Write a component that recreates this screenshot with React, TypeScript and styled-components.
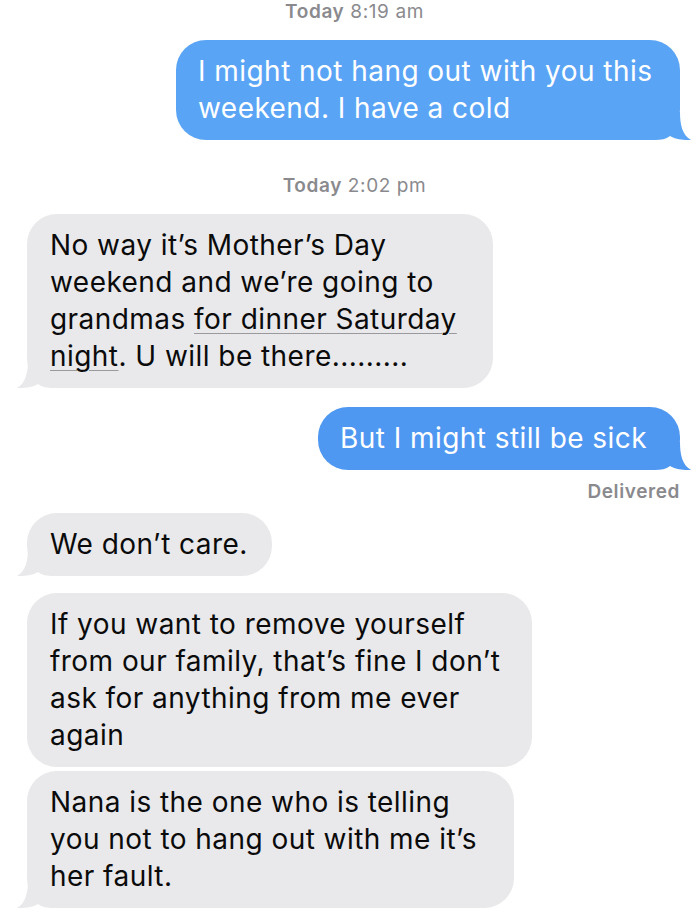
import React from "react";
import styled, { createGlobalStyle } from "styled-components";

const Global = createGlobalStyle`
  html, body { margin: 0; padding: 0; background: #ffffff; }
  body { font-family: Inter, "Noto Sans", sans-serif; -webkit-font-smoothing: antialiased; }
`;

const Thread = styled.div`
  display: flex;
  flex-direction: column;
  width: 700px;
  height: 922px;
  overflow: hidden;
  box-sizing: border-box;
  padding: 0 20px 0 27px;
  background: #fff;
`;

const Stamp = styled.div<{ $mt: number }>`
  margin-top: ${(p) => p.$mt}px;
  align-self: center;
  font-size: 19px;
  line-height: 22px;
  color: #8a8a8e;
  letter-spacing: 0.6px;
  padding-left: 2px;
  b { font-weight: 600; }
`;

const Status = styled.div<{ $mt: number }>`
  margin-top: ${(p) => p.$mt}px;
  align-self: flex-end;
  font-size: 19px;
  line-height: 22px;
  font-weight: 600;
  letter-spacing: 0.6px;
  color: #8a8a8e;
`;

const Bubble = styled.div<{ $mine?: boolean; $mt: number; $w: number; $bg?: string }>`
  position: relative;
  margin-top: ${(p) => p.$mt}px;
  align-self: ${(p) => (p.$mine ? "flex-end" : "flex-start")};
  width: ${(p) => p.$w}px;
  box-sizing: border-box;
  padding: 13px 0 13px ${(p) => (p.$mine ? 22 : 23)}px;
  border-radius: 30px;
  background: ${(p) => p.$bg ?? (p.$mine ? "#5aa4f6" : "#e9e9eb")};
  color: ${(p) => (p.$mine ? "#ffffff" : "#0b0b0b")};
  font-size: 28px;
  letter-spacing: 0.45px;
  line-height: 37px;
  white-space: nowrap;
`;

const Text = styled.span`
  position: relative;
  z-index: 1;
`;

const Link = styled.span`
  text-decoration: underline;
  text-decoration-color: #9a9a9e;
  text-decoration-thickness: 1px;
  text-underline-offset: 4px;
`;

const TailSvg = styled.svg<{ $mine?: boolean }>`
  position: absolute;
  bottom: 0;
  width: 40px;
  height: 28px;
  z-index: 0;
  ${(p) => (p.$mine ? "right: -11px;" : "left: -10px; transform: scaleX(-1);")}
`;

function Tail({ mine, color }: { mine?: boolean; color: string }) {
  return (
    <TailSvg $mine={mine} viewBox="0 0 40 28" aria-hidden>
      <path
        d="M0 0 H29 C29 12 31 23 40 28 C35 28.6 24 27.2 19 24 C15 27 10 28 4 28 H0 Z"
        fill={color}
      />
    </TailSvg>
  );
}

type Msg = {
  mine?: boolean;
  mt: number;
  w: number;
  tail?: boolean;
  bg?: string;
  lines: React.ReactNode[];
};

const GRAY = "#e9e9eb";

export default function App() {
  const render = (m: Msg, i: number) => {
    const color = m.bg ?? (m.mine ? "#5aa4f6" : GRAY);
    return (
      <Bubble key={i} $mine={m.mine} $mt={m.mt} $w={m.w} $bg={m.bg}>
        {m.tail && <Tail mine={m.mine} color={color} />}
        <Text>
          {m.lines.map((l, j) => (
            <React.Fragment key={j}>
              {j > 0 && <br />}
              {l}
            </React.Fragment>
          ))}
        </Text>
      </Bubble>
    );
  };

  return (
    <>
      <Global />
      <Thread>
        <Stamp $mt={1}>
          <b>Today</b> 8:19 am
        </Stamp>
        {render({
          mine: true,
          mt: 17,
          w: 504,
          tail: true,
          lines: ["I might not hang out with you this", "weekend. I have a cold"],
        }, 1)}
        <Stamp $mt={35}>
          <b>Today</b> 2:02 pm
        </Stamp>
        {render({
          mt: 17,
          w: 466,
          tail: true,
          lines: [
            "No way it\u2019s Mother\u2019s Day",
            "weekend and we\u2019re going to",
            <>grandmas <Link>for dinner Saturday</Link></>,
            <><Link>night</Link>. U will be there.........</>,
          ],
        }, 2)}
        {render({
          mine: true,
          mt: 19,
          w: 362,
          tail: true,
          bg: "#4f98f2",
          lines: ["But I might still be sick"],
        }, 3)}
        <Status $mt={11}>Delivered</Status>
        {render({
          mt: 10,
          w: 245,
          tail: true,
          lines: ["We don\u2019t care."],
        }, 4)}
        {render({
          mt: 17,
          w: 505,
          lines: [
            "If you want to remove yourself",
            "from our family, that\u2019s fine I don\u2019t",
            "ask for anything from me ever",
            "again",
          ],
        }, 5)}
        {render({
          mt: 4,
          w: 487,
          tail: true,
          lines: [
            "Nana is the one who is telling",
            "you not to hang out with me it\u2019s",
            "her fault.",
          ],
        }, 6)}
      </Thread>
    </>
  );
}
